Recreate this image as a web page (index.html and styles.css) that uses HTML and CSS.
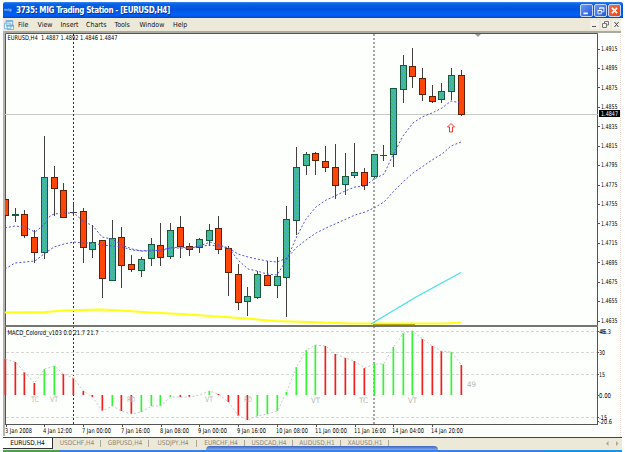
FILE: index.html
```html
<!DOCTYPE html>
<html lang="en">
<head>
<meta charset="utf-8">
<title>MIG Trading Station</title>
<link rel="stylesheet" href="styles.css">
</head>
<body>
<div class="window">
  <header class="titlebar">
    <span class="app-icon">mig</span>
    <h1 class="title">3735: MIG Trading Station - [EURUSD,H4]</h1>
    <div class="controls">
      <svg class="control" viewBox="0 0 13 13"><path d="M3 10h5" stroke="#fff" stroke-width="2"/></svg>
      <svg class="control" viewBox="0 0 13 13"><path d="M5.500 5V3.500h5v4.500H8M5 3.500h6M3.500 6.500h4v4h-4zM3 6.500h5" fill="none" stroke="#fff"/></svg>
      <svg class="control close" viewBox="0 0 13 13"><path d="M3.500 3.500l6 6M9.500 3.500l-6 6" stroke="#fff" stroke-width="2"/></svg>
    </div>
  </header>
  <nav class="menubar">
    <svg class="doc-icon" viewBox="0 0 11 11"><path d="M2.500.5h7v6h-7zM.5 3.500h7v6h-7zM3.500 5.500h7v5h-7z" fill="#eef8ff" stroke="#79afe0"/><path d="M2 1.500h8M3 6.500h8" stroke="#5d9fd6"/></svg>
    <ul class="menu"><li class="m-file">File</li><li class="m-view">View</li><li class="m-insert">Insert</li><li class="m-charts">Charts</li><li class="m-tools">Tools</li><li class="m-window">Window</li><li class="m-help">Help</li></ul>
    <div class="doc-controls">
      <svg viewBox="0 0 9 9"><path d="M2 6.500h4" stroke="#555"/></svg>
      <svg viewBox="0 0 9 9"><path d="M3.500 3V1.500h4V5H6M1.500 3.500h4v4h-4z" fill="none" stroke="#777"/></svg>
      <svg viewBox="0 0 9 9"><path d="M2.500 2l4 5M6.500 2l-4 5" stroke="#444"/></svg>
    </div>
  </nav>
  <main class="workspace">
    <svg id="chart" class="chart" viewBox="3 31 618 405" width="618" height="405"></svg>
  </main>
  <footer class="tabs">
    <div class="tab active">EURUSD,H4</div>
    <div class="tab">USDCHF,H4</div>
    <div class="tab">GBPUSD,H4</div>
    <div class="tab">USDJPY,H4</div>
    <div class="tab">EURCHF,H4</div>
    <div class="tab">USDCAD,H4</div>
    <div class="tab">AUDUSD,H1</div>
    <div class="tab">XAUUSD,H1</div>
    <svg class="arrows" viewBox="0 0 14 7"><path d="M3.500 1v5L1 3.500zM11 1v5l2.500-2.500z" fill="#aaa798"/></svg>
    <div class="popup-bar"></div>
  </footer>
  <div class="taskbar"><div class="start"></div><div class="tasks"></div><div class="tray"></div></div>
</div>
<script src="chart.js"></script>
</body>
</html>
```
FILE: styles.css
```css
* { box-sizing: border-box; }
body { margin: 0; background: #fff; font-family: "DejaVu Sans Condensed", "DejaVu Sans", sans-serif; }
.window { width: 625px; height: 452px; padding: 2px 0 0 3px; overflow: hidden; display: flex; flex-direction: column; }
.titlebar { width: 620px; height: 16px; display: flex; align-items: center; flex: none; background: linear-gradient(#3a86f2 0, #0863e4 12%, #0054df 45%, #0060f8 80%, #0048ca 100%); border-radius: 2px 2px 0 0; }
.app-icon { width: 13px; font-size: 4px; color: #8fb9f4; padding-left: 1px; font-weight: bold; line-height: 6px; }
.title { margin: 0; flex: 1; color: #fff; font-family: "DejaVu Sans Condensed", sans-serif; font-size: 8px; letter-spacing: -.35px; line-height: 15px; white-space: nowrap; text-shadow: 1px 1px #003a9c; }
.controls { display: flex; gap: 1px; padding-right: 2px; }
.control { width: 13px; height: 13px; border: 1px solid #c5d8fa; border-radius: 2px; background: linear-gradient(135deg, #6b98f4, #2158d8); }
.close { background: linear-gradient(135deg, #ee7052, #f0440c); }
.menubar { width: 618px; height: 13px; display: flex; align-items: center; flex: none; background: #ece9d8; }
.doc-icon { width: 10px; height: 10px; margin: 0 4px 0 1px; }
.menu { list-style: none; display: flex; margin: 0; padding: 0; flex: 1; font-size: 7px; line-height: 12px; color: #111; }
.m-file { width: 19.500px; }
.m-view { width: 23px; }
.m-insert { width: 25.500px; }
.m-charts { width: 28.500px; }
.m-tools { width: 25px; }
.m-window { width: 33.500px; }
.doc-controls { display: flex; gap: 2px; }
.doc-controls svg { width: 9px; height: 9px; background: #f4f2e8; }
.workspace { width: 618px; height: 406px; flex: none; background: #fdfffc; border-right: 1px dotted #e8d8d0; }
.chart { display: block; }
.tabs { position: relative; width: 619px; height: 13px; flex: none; display: flex; align-items: flex-start; background: #ece9d8; border-top: 1px solid #444; font-size: 6.500px; color: #8a887c; line-height: 10px; }
.tab { position: relative; height: 11px; width: 48px; text-align: center; white-space: nowrap; }
.tab:not(.active)::after { content: ""; position: absolute; right: 0; top: 2px; width: 1px; height: 7px; background: #aaa798; }
.tab.active { width: 50px; background: #fff; color: #000; border-right: 1px solid #333; border-bottom: 1px solid #333; }
.arrows { width: 14px; height: 7px; margin: 2px 3px 0 auto; }
.popup-bar { position: absolute; left: 203px; bottom: 0; width: 232px; height: 4px; border-radius: 4px 4px 0 0; background: linear-gradient(#3d66c0, #82a9ee); }
.taskbar { height: 2px; width: 619px; display: flex; flex: none; background: #2b6be2; }
.start { width: 56px; background: #4da04d; }
.tasks { flex: 1; background: #3a80ea; }
.tray { width: 78px; background: #1595ea; }
text { white-space: pre; }
.axis { font-size: 6.600px; fill: #000; }
.signal { font-size: 7.500px; fill: #b5b7b4; }
.bull { fill: #45b5a0; stroke: #19593c; }
.bear { fill: #ff4606; stroke: #5f2008; }
.wick { stroke: #453e3e; }
.ma { fill: none; stroke: #5151dc; stroke-dasharray: 2 2; }
.grid { stroke: #d5d7d2; stroke-dasharray: 3 2; }
.line { stroke: #555; }
```
FILE: chart.js
```js
const out = [];
const rect = (x, y, w, h, fill) => out.push(`<rect x="${x}" y="${y}" width="${w}" height="${h}" fill="${fill}"/>`);
const path = (d, attrs) => out.push(`<path d="${d}" ${attrs}/>`);
const label = (x, y, s, len, cls = 'axis') => out.push(`<text x="${x}" y="${y}" class="${cls}" ${len ? `textLength="${len}" lengthAdjust="spacingAndGlyphs"` : ''}>${s}</text>`);
// [direction, body top, body bottom, high, low], one per H4 bar
const bars = [
['d',199,216,199,219],['u',213.5,215.5,208,222],['d',214,235.5,210,238],['d',236.5,253,230,263],
['u',176.5,253,136,259],['d',177,189,166,216],['d',189.5,217.5,183,218],['x',212.5,212.5,204,216],
['d',211,248,208,263],['u',241.5,249.5,225,258],['d',240,279,240,298],['u',238,280.5,220,281],
['d',237,265.5,227,288],['d',264,269.5,255,272],['u',259,270.5,257,277],['u',244,259,238,266],
['d',245,257.5,223,266],['u',229.5,256.5,223,259],['d',226.5,247,216,258],['d',246,249.5,243,256],
['u',239,248,238,253],['u',229.5,240.5,224,246],['d',228,249.5,216,254],['d',248,272.5,246,296],
['d',274,303,264,310],['u',296,301.5,287,316],['u',274,298,271,299],['d',275,285.5,261,286],
['u',276,286,257,298],['u',219,277.5,206,317],['u',166.5,220.5,147,235],['u',154,166,152,175],
['d',153,161,152,175],['d',160.5,167.5,146,172],['d',166.5,185.5,144,199],['u',176,185,153,195],
['u',171.5,176,143,178],['d',172,185.5,168,190],['u',154,177,154,178],['x',155.5,155.5,145,161],
['u',88,154.5,88,167],['u',65,90,55,103],['d',65.5,77,48,88],['d',77.5,95,68,101],
['d',95.5,101.5,85,103],['u',91,100,83,103],['u',74.5,92,68,100],['d',75,114.5,70,116]];
// [color, end y] of every histogram bar; the zero line is at 395
const macd = ['r359','r362','r372','r383','g369','g366','r374','r378','r391','r397','r411','g406','r411','r414','g412','g406','g406','g397','r397','r397','','g391','r394','r402','r416','r420','g416','g414','g411','g392','g367','g350','g345','r346','r354','r358','r361','r368','g364','g364','g347','g333','g331','r339','r346','r351','g352','r365'];
const px = i => Math.round(5.5 + i * 9.7 - .5) + .5;

out.push('<defs><pattern id="weave" width="4" height="4" patternUnits="userSpaceOnUse"><rect width="4" height="4" fill="#48b5b4"/><path d="M0 0h1v1H0zM2 1h1v1H2zM1 2h1v1H1zM3 3h1v1H3z" fill="#35bd62"/></pattern><clipPath id="plot"><rect x="5" y="33" width="593" height="392"/></clipPath></defs>');
rect(3, 31, 618, 2, '#aaa9a2');
rect(3, 31, 2, 406, '#b5b4ac');
path('M5.5 425V33.500H597.500V425', 'fill="none" stroke="#555"');
path('M475 34h6l-3 3z', 'fill="#999"');
path('M5 114.500H598', 'stroke="#c9cac5"');
path('M73.500 34V424', 'stroke="#333" stroke-dasharray="2 2"');
path('M374 34V424', 'stroke="#8c8984" stroke-width="1.500" stroke-dasharray="2 2"');

out.push('<g clip-path="url(#plot)">');
bars.forEach(([dir, top, bottom, high, low], i) => {
  const x = px(i);
  path(`M${x} ${high}V${low}`, 'class="wick"');
  if (dir === 'x') return path(`M${x - 3.5} ${top}h7`, 'class="wick"');
  const t = Math.round(top) + .5, b = Math.max(Math.round(bottom) - .5, t + 1);
  out.push(`<rect x="${x - 3}" y="${t}" width="6" height="${b - t}" class="${dir === 'u' ? 'bull' : 'bear'}" ${dir === 'u' ? 'style="fill:url(#weave)"' : ''}/>`);
});
path('M5 228L15 226 25 227 35 232 44 225 50 216 54 214 64 213 74 213 83 221 93 226 102 237 112 239 122 245 132 249 142 251 151 250 161 251 170 248 180 247 190 248 200 246 210 242 219 245 229 248 238 260 248 269 257 271 267 274 277 275 287 259 297 236 306 219 316 207 326 200 335 196 345 191 355 187 365 186 374 179 384 174 393 155 403 136 413 123 422 117 432 113 442 108 451 101 461 103', 'class="ma"');
path('M5 269L15 263 35 261 44 254 54 247 64 244 74 242 83 243 93 243 102 245 112 246 122 247 132 250 142 251 151 251 161 250 170 248 190 248 210 245 229 248 238 254 248 257 257 259 267 261 277 262 287 258 297 247 306 240 316 233 326 228 335 224 355 215 365 212 374 208 384 202 393 192 403 182 413 173 422 167 432 160 442 154 451 146 461 142', 'class="ma"');
path('M5 312.500L45 312 65 310.500 100 309.500 120 310.500 150 312.500 180 314 210 316 240 318 275 321 310 322 350 323.500H445L461 322.500', 'fill="none" stroke="#ffff10" stroke-width="2"');
path('M371 324L416 297 461 272.500', 'fill="none" stroke="#45e0e0" stroke-width="1.200"');
out.push('</g>');
path('M449.500 132v-5h-2l3.500-3.500 3.500 3.500h-2v5z', 'fill="#fff" stroke="#f33"');
rect(5, 325, 593, 2, '#77756f');
path('M373 324.500H415', 'stroke="#b5a900"');

[331.5, 352.5, 374.5, 417.5].forEach(y => path(`M6 ${y}H597`, 'class="grid"'));
let env = '';
macd.forEach((v, i) => {
  if (!v) { env += `L${px(i)} 395 `; return; }
  const y = +v.slice(1), x = px(i);
  env += `${env ? 'L' : 'M'}${x} ${y} `;
  rect(x - 1, Math.min(y, 395), 1.7, Math.abs(y - 395), v[0] === 'r' ? '#f31e1e' : '#35f335');
});
path(env, 'fill="none" stroke="#c9cac7" stroke-dasharray="2 2"');
[['TC',31,402,8],['VT',50,402,8],['RD',127,402,8],['VT',205,402,8],['RD',244,402,8],['VT',311,403,9],['TC',359,403,9],['VT',408,403,9],['49',467,387,9]].forEach(a => label(a[1], a[2], a[0], a[3], 'signal'));
path('M5 424.500H598', 'stroke="#555"');

for (let i = 0; i < 15; i++) {
  const y = 48.5 + i * 19.43;
  path(`M597 ${Math.round(y) + .5}h3`, 'class="line"');
  label(601, y + 2.4, (1.4915 - i * .002).toFixed(4), 16.5);
}
rect(599, 110, 21, 7, '#000');
out.push('<text x="601" y="116" class="axis" style="fill:#fff" textLength="17" lengthAdjust="spacingAndGlyphs">1.4847</text>');
[['46.3',333.5,11],['30',355,6],['15',376.5,6],['0.00',397.5,12],['-15',419.5,8],['-20.6',423.5,13]].forEach(a => { path(`M597 ${Math.round(a[1]) - 2.5}h2`, 'class="line"'); label(a[0] === '46.3' ? 600 : 599, a[1], a[0], a[2]); });
label(599, 333.5, '45', 6);
label(7.5, 40, 'EURUSD,H4  1.4887 1.4892 1.4846 1.4847', 110);
label(7.5, 334.5, 'MACD_Colored_v103 0.0 21.7 21.7', 91);
[['3 Jan 2008',5,27],['4 Jan 12:00',43,29],['7 Jan 00:00',82,29],['7 Jan 16:00',121,29],['8 Jan 08:00',160,29],['9 Jan 00:00',198,29],['9 Jan 16:00',237,29],['10 Jan 08:00',276,32],['11 Jan 00:00',315,32],['11 Jan 16:00',354,32],['14 Jan 04:00',392,32],['14 Jan 20:00',431,32]].forEach(a => { label(a[1], 433, a[0], a[2]); path(`M${a[1] + 1.5} 425v2`, 'class="line"'); });
document.getElementById('chart').innerHTML = out.join('');
```
